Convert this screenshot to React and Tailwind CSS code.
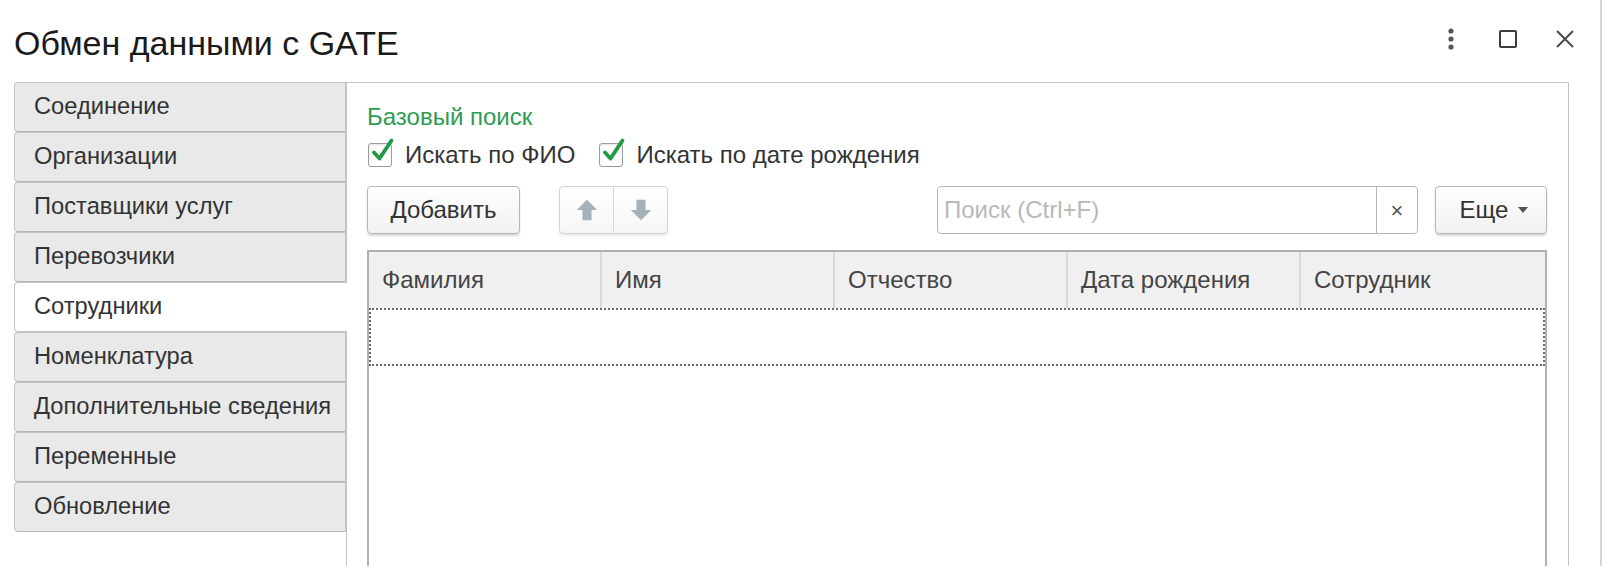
import React from 'react';

const tabs = [
  'Соединение',
  'Организации',
  'Поставщики услуг',
  'Перевозчики',
  'Сотрудники',
  'Номенклатура',
  'Дополнительные сведения',
  'Переменные',
  'Обновление',
];

const columns = ['Фамилия', 'Имя', 'Отчество', 'Дата рождения', 'Сотрудник'];

function CheckBox({ className = '' }) {
  return (
    <div className={`relative block w-[24px] h-[24px] border border-[#9c9c9c] rounded-[3px] bg-white shrink-0 shadow-[inset_0_1px_2px_rgba(0,0,0,0.12)] ${className}`}>
      <svg className="absolute left-[1px] top-[-8px] w-[25px] h-[28px]" viewBox="0 0 25 28">
        <path d="M4 16.5 L9.5 22.5 L21.5 4.5" fill="none" stroke="#1f9a43" strokeWidth="3.8" strokeLinecap="round" strokeLinejoin="round" />
      </svg>
    </div>
  );
}

function ArrowIcon({ down }) {
  return (
    <svg className="w-[24px] h-[24px]" viewBox="0 0 20 20">
      <path
        d="M10 1.5 L18.5 10 H13.8 V18.5 H6.2 V10 H1.5 Z"
        fill="#a6b2ba"
        transform={down ? 'rotate(180 10 10)' : undefined}
      />
    </svg>
  );
}

export default function App() {
  return (
    <div className="w-[1610px] h-[586px] bg-white overflow-hidden font-['Liberation_Sans',Arial,sans-serif] text-[#333]">
      <div className="w-[1602px] h-[566px] border-r-2 border-[#d4d4d4] flex flex-col">
        {/* Title bar */}
        <div className="h-[82px] flex items-center shrink-0">
          <h1 className="pl-[14px] pt-[4px] text-[34px] text-[#1a1a1a] leading-none">Обмен данными с GATE</h1>
          <div className="ml-auto pr-[25px] flex items-center gap-[37px] pb-[4px]">
            <svg className="w-[20px] h-[24px]" viewBox="0 0 20 24">
              <circle cx="10" cy="4" r="2.6" fill="#555" />
              <circle cx="10" cy="12" r="2.6" fill="#555" />
              <circle cx="10" cy="20" r="2.6" fill="#555" />
            </svg>
            <svg className="w-[20px] h-[20px]" viewBox="0 0 20 20">
              <rect x="2" y="2" width="16" height="16" rx="1" fill="none" stroke="#3c3c3c" strokeWidth="2" />
            </svg>
            <svg className="w-[20px] h-[20px]" viewBox="0 0 20 20">
              <path d="M2 2 L18 18 M18 2 L2 18" stroke="#4a4a4a" strokeWidth="2" fill="none" />
            </svg>
          </div>
        </div>

        {/* Body */}
        <div className="flex flex-1 min-h-0">
          {/* Tabs */}
          <div className="w-[346px] pl-[14px] shrink-0 flex flex-col">
            {tabs.map((t) => {
              const active = t === 'Сотрудники';
              return (
                <div
                  key={t}
                  className={
                    active
                      ? 'relative z-10 -mr-[1px] h-[50px] flex items-center pl-[19px] bg-white border border-r-0 border-[#c4c4c4] rounded-l-[4px] text-[23.7px] whitespace-nowrap'
                      : 'h-[50px] flex items-center pl-[19px] bg-[#e9e9e9] border border-[#c4c4c4] border-b-[#b4b4b4] rounded-l-[4px] text-[23.7px] whitespace-nowrap'
                  }
                >
                  {t}
                </div>
              );
            })}
          </div>

          {/* Page */}
          <div className="w-[1223px] shrink-0 border-l border-t border-r border-[#c4c4c4] flex flex-col pl-[20px] pr-[21px] pt-[20px] min-h-0">
            <div className="h-[27px] leading-[27px] text-[24px] text-[#2e9b52]">Базовый поиск</div>

            <div className="mt-[10px] h-[30px] flex items-center text-[24px]">
              <CheckBox className="ml-[1px]" />
              <span className="ml-[13px]">Искать по ФИО</span>
              <CheckBox className="ml-[24px]" />
              <span className="ml-[13px]">Искать по дате рождения</span>
            </div>

            <div className="mt-[16px] h-[48px] flex items-stretch text-[24px]">
              <button className="w-[153px] border border-[#b6b6b6] rounded-[4px] bg-gradient-to-b from-white to-[#f1f1f1] shadow-[0_2px_2px_rgba(0,0,0,0.15)] text-[#333]">
                Добавить
              </button>
              <div className="ml-[39px] w-[109px] flex border border-[#d4d4d4] rounded-[4px] bg-gradient-to-b from-white to-[#f6f6f6] shadow-[0_2px_2px_rgba(0,0,0,0.08)]">
                <div className="flex-1 flex items-center justify-center border-r border-[#d8d8d8]">
                  <ArrowIcon />
                </div>
                <div className="flex-1 flex items-center justify-center">
                  <ArrowIcon down />
                </div>
              </div>

              <div className="ml-auto w-[481px] flex border border-[#b6b6b6] rounded-[4px] bg-white">
                <div className="flex-1 flex items-center pl-[6px] text-[#b8b8b8]">Поиск (Ctrl+F)</div>
                <div className="w-[41px] border-l border-[#b6b6b6] flex items-center justify-center text-[#555] text-[22px]">×</div>
              </div>
              <button className="ml-[17px] w-[112px] border border-[#b6b6b6] rounded-[4px] bg-gradient-to-b from-white to-[#f1f1f1] shadow-[0_2px_2px_rgba(0,0,0,0.15)] text-[#333] flex items-center justify-center gap-[10px] pl-[6px]">
                <span>Еще</span>
                <svg className="w-[10px] h-[6px]" viewBox="0 0 10 6">
                  <path d="M0 0 H10 L5 6 Z" fill="#555" />
                </svg>
              </button>
            </div>

            {/* Table */}
            <div className="mt-[16px] flex-1 min-h-0 border-2 border-b-0 border-[#b0b0b0] flex flex-col">
              <div className="h-[56px] shrink-0 flex bg-[#f0f0f0] text-[24px] text-[#444]">
                {columns.map((c, i) => (
                  <div
                    key={c}
                    className={
                      i < columns.length - 1
                        ? 'w-[233px] shrink-0 border-r-2 border-[#d9d9d9] flex items-center pl-[13px]'
                        : 'flex-1 flex items-center pl-[13px]'
                    }
                  >
                    {c}
                  </div>
                ))}
              </div>
              <div className="h-[58px] shrink-0 border-2 border-dotted border-[#6a6a6a]" />
              <div className="flex-1" />
            </div>
          </div>
        </div>
      </div>
    </div>
  );
}
